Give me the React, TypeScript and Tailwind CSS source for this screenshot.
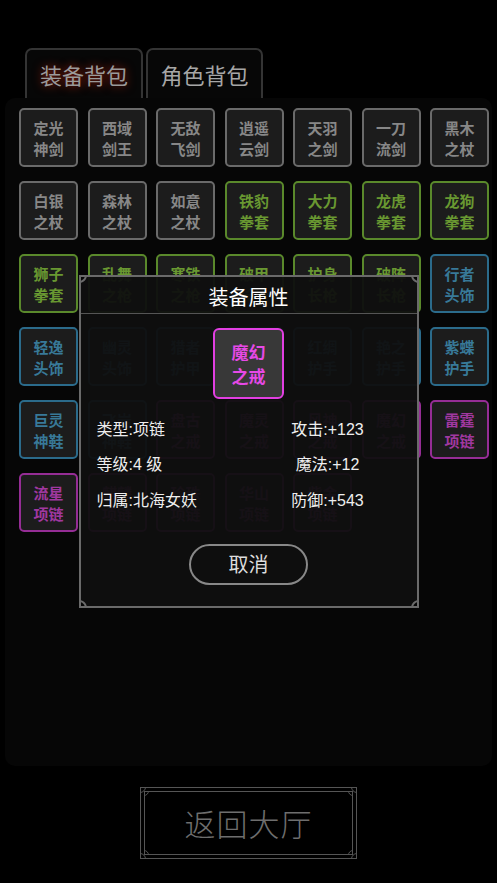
import React from 'react';

type Tone = 'gray' | 'green' | 'blue' | 'pink';

const toneClass: Record<Tone, string> = {
  gray: 'border-[#6a6a6a] text-[#878787]',
  green: 'border-[#5a892b] text-[#699831]',
  blue: 'border-[#2b6b8b] text-[#387998]',
  pink: 'border-[#952d95] text-[#a038a0]',
};

const bag: [string, Tone][] = [
  ['定光神剑', 'gray'], ['西域剑王', 'gray'], ['无敌飞剑', 'gray'], ['逍遥云剑', 'gray'], ['天羽之剑', 'gray'], ['一刀流剑', 'gray'], ['黑木之杖', 'gray'],
  ['白银之杖', 'gray'], ['森林之杖', 'gray'], ['如意之杖', 'gray'], ['铁豹拳套', 'green'], ['大力拳套', 'green'], ['龙虎拳套', 'green'], ['龙狗拳套', 'green'],
  ['狮子拳套', 'green'], ['乱舞之枪', 'green'], ['寒铁之枪', 'green'], ['破甲长枪', 'green'], ['护身长枪', 'green'], ['破阵长枪', 'green'], ['行者头饰', 'blue'],
  ['轻逸头饰', 'blue'], ['幽灵头饰', 'blue'], ['猎者护甲', 'blue'], ['银月护甲', 'blue'], ['红绸护手', 'blue'], ['艳之护手', 'blue'], ['紫蝶护手', 'blue'],
  ['巨灵神鞋', 'blue'], ['飞岩神鞋', 'blue'], ['盘古之戒', 'pink'], ['魔灵之戒', 'pink'], ['风神之戒', 'pink'], ['魔幻之戒', 'pink'], ['雷霆项链', 'pink'],
  ['流星项链', 'pink'], ['麒麟项链', 'pink'], ['珍珠项链', 'pink'], ['华山项链', 'pink'], ['紫金项链', 'pink'],
];

const BagItem = ({ name, tone }: { name: string; tone: Tone }) => (
  <div
    className={`w-[59px] h-[59px] rounded-[5px] border-2 bg-[#1c1c1c] flex flex-col items-center justify-center text-[15px] font-bold leading-[21px] ${toneClass[tone]}`}
  >
    <span>{name.slice(0, 2)}</span>
    <span>{name.slice(2)}</span>
  </div>
);

// concave cut corners of the detail dialog
const DialogCorners = () => {
  const c = 'absolute w-4 h-4 rounded-full border-2 border-[#6a6a6a] bg-[#050505]';
  return (
    <>
      <div className={`${c} -left-[10px] -top-[10px]`} />
      <div className={`${c} -right-[10px] -top-[10px]`} />
      <div className={`${c} -left-[10px] -bottom-[10px]`} />
      <div className={`${c} -right-[10px] -bottom-[10px]`} />
    </>
  );
};

const OuterCorners = () => {
  const c = 'absolute w-3 h-3 rounded-full border border-[#555] bg-black';
  return (
    <>
      <div className={`${c} -left-[7px] -top-[7px]`} />
      <div className={`${c} -right-[7px] -top-[7px]`} />
      <div className={`${c} -left-[7px] -bottom-[7px]`} />
      <div className={`${c} -right-[7px] -bottom-[7px]`} />
    </>
  );
};

const InnerCorners = () => {
  const c = 'absolute w-2.5 h-2.5 rounded-full border border-[#555] bg-black';
  return (
    <>
      <div className={`${c} -left-[6px] -top-[6px]`} />
      <div className={`${c} -right-[6px] -top-[6px]`} />
      <div className={`${c} -left-[6px] -bottom-[6px]`} />
      <div className={`${c} -right-[6px] -bottom-[6px]`} />
    </>
  );
};

const stats = [
  ['类型:项链', '攻击:+123'],
  ['等级:4 级', '魔法:+12'],
  ['归属:北海女妖', '防御:+543'],
];

export default function App() {
  return (
    <div className="relative w-[497px] h-[883px] bg-black font-['Noto_Sans_CJK_SC',sans-serif] overflow-hidden">
      {/* tabs */}
      <div className="flex pl-[25px] pt-[48px] gap-[3px]">
        <div className="w-[118px] h-[50px] border-2 border-b-0 border-[#343434] rounded-t-[7px] bg-[#070707] flex items-center justify-center text-[22px] text-[#9a9a9a] [text-shadow:0_0_10px_rgba(170,30,10,0.9)]">
          装备背包
        </div>
        <div className="w-[117px] h-[50px] border-2 border-b-0 border-[#343434] rounded-t-[7px] bg-[#070707] flex items-center justify-center text-[22px] text-[#a6a6a6]">
          角色背包
        </div>
      </div>

      {/* bag grid */}
      <div className="ml-[5px] w-[487px] h-[668px] bg-[#060606] rounded-[10px] pt-[10px] pl-[14px]">
        <div className="grid grid-cols-[repeat(7,59px)] gap-x-[9.5px] gap-y-[14px]">
          {bag.map(([name, tone]) => (
            <BagItem key={name} name={name} tone={tone} />
          ))}
        </div>
      </div>

      {/* back to lobby */}
      <div className="mt-[21px] flex justify-center">
        <div className="relative w-[217px] h-[72px] border border-[#555] p-[3px] overflow-hidden">
          <OuterCorners />
          <div className="relative h-full border border-[#555] overflow-hidden flex items-center justify-center">
            <InnerCorners />
            <span className="relative text-[31px] font-light text-[#6e6e6e] tracking-[1px]">返回大厅</span>
          </div>
        </div>
      </div>

      {/* item detail dialog */}
      <div className="absolute left-1/2 -translate-x-1/2 top-[275px] w-[340px] border-2 border-[#6a6a6a] bg-[#0f0f0f]/95 overflow-hidden pb-[21px]">
        <DialogCorners />
        <div className="h-[37px] flex items-center justify-center border-b border-[#555] text-[20px] text-white pt-[3px]">
          装备属性
        </div>
        <div className="mt-[14px] mx-auto w-[71px] h-[71px] rounded-[6px] border-2 border-[#e23fe2] bg-[#383838] flex flex-col items-center justify-center text-[17px] font-bold leading-[24px] text-[#e649e6]">
          <span>魔幻</span>
          <span>之戒</span>
        </div>
        <div className="mt-[13px] font-['Liberation_Sans','Noto_Sans_CJK_SC',sans-serif] text-[16px] text-[#eeeeee]">
          {stats.map(([left, right]) => (
            <div key={left} className="flex h-[35.5px] items-center">
              <span className="w-[170px] pl-[16px]">{left}</span>
              <span className="w-[154px] text-center">{right}</span>
            </div>
          ))}
        </div>
        <div className="mt-[25px] mx-auto w-[119px] h-[41px] rounded-full border-2 border-[#888] flex items-center justify-center text-[20px] text-[#dddddd]">
          取消
        </div>
      </div>
    </div>
  );
}
